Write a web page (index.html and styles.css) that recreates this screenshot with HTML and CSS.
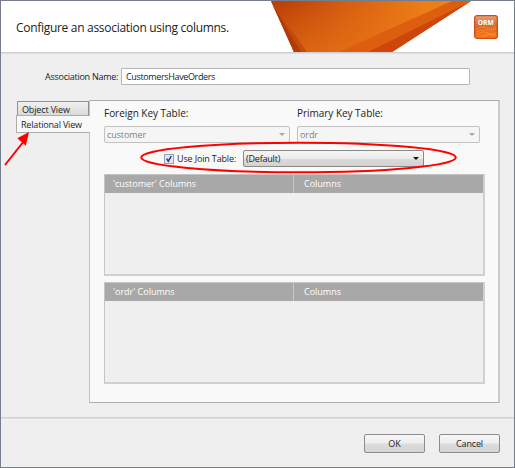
FILE: index.html
```html
<!DOCTYPE html>
<html lang="en">
<head>
<meta charset="utf-8">
<title>Association</title>
<link rel="stylesheet" href="styles.css">
</head>
<body>
<div class="dialog">
  <header class="header">
    <h1 class="title">Configure an association using columns.</h1>
    <svg class="banner" width="202" height="51" viewBox="0 0 202 51">
      <defs>
        <linearGradient id="glow" gradientUnits="userSpaceOnUse" x1="10" y1="0" x2="150" y2="30">
          <stop offset="0" stop-color="#bb400a"/><stop offset=".4" stop-color="#d35a10"/><stop offset="1" stop-color="#ee7f17"/>
        </linearGradient>
        <linearGradient id="low" gradientUnits="userSpaceOnUse" x1="0" y1="0" x2="0" y2="51">
          <stop offset="0" stop-color="#ea7514" stop-opacity="0"/><stop offset="1" stop-color="#ea7514" stop-opacity=".55"/>
        </linearGradient>
      </defs>
      <path d="M0 0H200L121 51H23Z" fill="url(#glow)"/>
      <path d="M0 0H200L121 51H23Z" fill="url(#low)"/>
      <path d="M0 0L36 51H23Z" fill="#c54b0c"/>
      <path d="M0 0L30 51H23Z" fill="#b23b09"/>
      <path d="M181 0H200L121 51H68Z" fill="#de5e10"/>
      <path d="M200 0L121 51H97Z" fill="#cd460c"/>
    </svg>
    <svg class="logo" width="24" height="24" viewBox="0 0 24 24">
      <defs><linearGradient id="tile" x1="0" y1="0" x2="0" y2="1">
        <stop offset="0" stop-color="#e9a779"/><stop offset=".3" stop-color="#d87746"/><stop offset=".55" stop-color="#e4641e"/><stop offset="1" stop-color="#ff7b0b"/>
      </linearGradient></defs>
      <rect x=".6" y=".6" width="22.8" height="22.8" rx="2.5" fill="url(#tile)" stroke="#c94b22" stroke-width="1.2"/>
      <path d="M2 14Q8 11 13 13T22 12M2 17Q8 14 13 15T22 14M3 20Q9 15 14 18T22 17M8 22Q13 18 22 20" fill="none" stroke="#f4a363" stroke-width=".5"/>
      <text x="3.7" y="9.6" class="logo-text" textLength="16" lengthAdjust="spacingAndGlyphs">ORM</text>
    </svg>
  </header>

  <main class="body">
    <div class="name-row">
      <label class="name-label">Association Name:</label>
      <div class="name-input">CustomersHaveOrders</div>
    </div>
    <div class="tabbed">
      <nav class="tabs">
        <div class="tab tab-object">Object View</div>
        <div class="tab tab-relational">Relational View</div>
      </nav>
      <section class="panel">
        <div class="keys">
          <div class="key"><div class="key-label">Foreign Key Table:</div><div class="combo disabled"><span>customer</span><i class="arrow"></i></div></div>
          <div class="key primary"><div class="key-label">Primary Key Table:</div><div class="combo disabled"><span>ordr</span><i class="arrow"></i></div></div>
        </div>
        <div class="join">
          <svg class="check" width="10" height="10" viewBox="0 0 10 10"><rect x=".5" y=".5" width="9" height="9" fill="#e4e7ec" stroke="#9a9fa7"/><path d="M2.7 4.6L4.3 7.2L7.3 2" fill="none" stroke="#28388a" stroke-width="1.5"/></svg>
          <label class="join-label">Use Join Table:</label>
          <div class="combo"><span>(Default)</span><i class="arrow"></i></div>
          <svg class="ring" width="320" height="36" viewBox="0 0 320 36"><ellipse cx="160.5" cy="17.5" rx="157.3" ry="14.8" fill="none" stroke="#f00" stroke-width="2"/></svg>
        </div>
        <div class="grid">
          <div class="grid-head"><div class="cell">'customer' Columns</div><div class="cell cell-last">Columns</div></div>
        </div>
        <div class="grid">
          <div class="grid-head"><div class="cell">'ordr' Columns</div><div class="cell cell-last">Columns</div></div>
        </div>
      </section>
    </div>
    <svg class="pointer" width="30" height="40" viewBox="0 0 30 40"><path d="M2 35L21 11" stroke="#f00" stroke-width="2" fill="none"/><path d="M26 2L14.8 9L23.8 16Z" fill="#f00" transform="rotate(4 26 2)"/></svg>
  </main>

  <footer class="footer">
    <button class="button">OK</button>
    <button class="button cancel">Cancel</button>
  </footer>
</div>
</body>
</html>
```

FILE: styles.css
```css
* { box-sizing: border-box; }
body { margin: 0; font: 9px/12px "Open Sans", "Noto Sans", sans-serif; color: #222; }
.dialog { width: 515px; height: 468px; border: 1px solid #747d89; background: #efefef; display: flex; flex-direction: column; }
.header { height: 52px; flex: none; background: #fff; border-bottom: 1px solid #cfcfcf; box-shadow: 0 1px #dedede; display: flex; align-items: flex-start; }
.title { margin: 17px 0 0 15px; width: 214px; height: 20px; font-size: 12px; line-height: 20px; font-weight: 400; letter-spacing: -.3px; white-space: nowrap; }
.banner { margin-left: 41px; flex: none; }
.logo { margin: 14px 0 0 1px; flex: none; }
.logo-text { font: bold 7px "Open Sans", sans-serif; fill: #fff; }

.body { position: relative; height: 365px; flex: none; padding-top: 15px; border-bottom: 1px solid #d2d2d2; box-shadow: 0 1px #dedede; }
.name-row { display: flex; height: 17px; align-items: center; }
.name-label { margin-left: 44px; width: 76px; letter-spacing: -.26px; white-space: nowrap; }
.name-input { width: 349px; height: 17px; padding: 2px 4px; line-height: 12px; letter-spacing: -.36px; background: #fff; border: 1px solid #b5b5b5; border-radius: 1px; }

.tabbed { display: flex; margin: 15px 0 0 15px; }
.tabs { width: 73px; padding-top: 1px; }
.tab { white-space: nowrap; }
.tab-object { margin-left: 1px; height: 14px; padding: 2px 0 0 4px; letter-spacing: -.15px; border: 1px solid #929292; border-bottom: 0; background: linear-gradient(#f1f1f1, #dadada); }
.tab-relational { position: relative; width: 74px; height: 18px; padding: 3px 0 0 4px; letter-spacing: -.18px; background: #f9f9f9; border: 1px solid #adadad; border-right: 0; }
.panel { width: 411px; height: 303px; padding: 4px 0 0 14px; background: #f9f9f9; border: 1px solid #a9abb0; border-left-color: #c1c1c5; border-right: 2px solid #ccc; }
.keys { display: flex; gap: 7px; }
.key { width: 186px; }
.key.primary { width: 183px; }
.key-label { height: 21px; font-size: 10px; line-height: 16px; letter-spacing: -.03px; white-space: nowrap; }
.combo { display: flex; justify-content: space-between; align-items: center; height: 17px; padding: 0 4px 0 2px; letter-spacing: -.2px; border: 1px solid #898989; border-radius: 2px; background: linear-gradient(#f5f5f5, #ebebeb 50%, #dadada 55%, #d2d2d2); }
.disabled { color: #838383; border-color: #c2c2c2; background: #f5f5f5; letter-spacing: -.1px; }
.arrow { border: 3px solid transparent; border-top: 3.5px solid #111; border-bottom: 0; }
.disabled .arrow { border-top-color: #aaa; }
.join { position: relative; display: flex; align-items: center; height: 17px; margin: 7px 0 0 60px; }
.join-label { width: 66px; margin-left: 3px; white-space: nowrap; letter-spacing: -.15px; }
.join .combo { width: 181px; }
.ring { position: absolute; left: -26px; top: -10px; }
.grid { width: 381px; height: 102px; margin: 7px 0 0; border: 1px solid #c5c5c5; border-right: 2px solid #d0d0d0; border-bottom: 2px solid #d0d0d0; background: #efefef; }
.grid + .grid { margin-top: 6px; }
.grid-head { display: flex; height: 18px; background: #a8a8a8; color: #fff; }
.cell { width: 189px; padding: 3px 0 0 8px; border-right: 1px solid #c8c8c8; white-space: nowrap; }
.cell-last { width: auto; flex: 1; padding-left: 10px; border: 0; }
.pointer { position: absolute; left: 2px; top: 77px; }

.footer { display: flex; justify-content: flex-end; gap: 14px; padding: 16px 14px 0 0; }
.button { width: 61px; height: 19px; padding: 0; border: 1px solid #8c8c8c; border-radius: 2px; background: linear-gradient(#f7f7f7, #eee 49%, #dcdcdc 51%, #d5d5d5); color: #222; font: inherit; }
.cancel { letter-spacing: -.15px; }
```
